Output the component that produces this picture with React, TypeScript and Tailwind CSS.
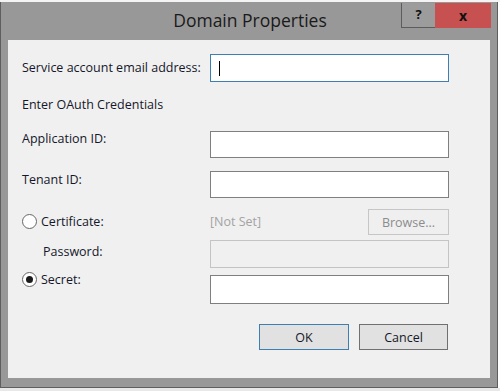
import type { ReactNode } from "react";

const FONT = { fontFamily: '"Open Sans", "Noto Sans", sans-serif' };

function Radio({ checked }: { checked?: boolean }) {
  return (
    <span className="flex h-[15px] w-[15px] items-center justify-center rounded-full border border-[#666] bg-white">
      {checked && <span className="h-[7px] w-[7px] rounded-full bg-[#1a1a1a]" />}
    </span>
  );
}

function Field({ h, disabled, focused, children }: { h: string; disabled?: boolean; focused?: boolean; children?: ReactNode }) {
  const cls = focused
    ? "border-[#3c7fb1] bg-white"
    : disabled
      ? "border-[#c4c4c4] bg-[#f0f0f0]"
      : "border-[#7f7f7f] bg-white";
  return <div className={`flex w-[239px] items-center border px-2 ${h} ${cls}`}>{children}</div>;
}

export default function App() {
  return (
    <div className="flex h-[391px] w-[500px] flex-col overflow-hidden bg-white" style={FONT}>
      {/* window behind peeks out at the top */}
      <div className="h-[2px] bg-[#f4f4f4]" />

      <div className="flex h-[386px] w-[498px] flex-col border-b border-l border-r border-[#5e5e5e] bg-[#989898]">
        {/* Title bar */}
        <div className="relative flex h-[38px] items-center justify-center">
          <span className="ml-[2px] text-[17.5px] leading-none text-[#1a1a1a]">Domain Properties</span>
          <div className="absolute right-[6px] top-[1px] flex">
            <div className="flex h-[25px] w-[34px] items-center justify-center border-b border-l border-[#5c5c5c] bg-[#9c9c9c] text-[13px] font-bold text-[#111]">
              ?
            </div>
            <div className="flex h-[25px] w-[56px] items-center justify-center bg-[#c75050] text-[14px] font-bold leading-none text-[#111]">
              x
            </div>
          </div>
        </div>

        {/* Client area */}
        <div className="ml-[7px] flex h-[338px] w-[482px] flex-col bg-[#f0f0f0] pl-[14px] pt-[14px] text-[12.5px] leading-[17px] text-[#15172a]">
          <div className="flex items-start">
            <span className="mt-[5px] w-[188px]">Service account email address:</span>
            <Field h="h-[28px]" focused>
              <span className="h-[15px] w-px bg-black" />
            </Field>
          </div>

          <div className="mt-[14px]">Enter OAuth Credentials</div>

          <div className="mt-[17px] flex items-start">
            <span className="w-[188px]">Application ID:</span>
            <div className="mt-[1px]">
              <Field h="h-[27px]" />
            </div>
          </div>

          <div className="mt-[13px] flex items-start">
            <span className="w-[188px]">Tenant ID:</span>
            <Field h="h-[27px]" />
          </div>

          <div className="mt-[11px] flex items-start">
            <div className="flex w-[188px] items-start">
              <span className="mt-[5px]">
                <Radio />
              </span>
              <span className="ml-[4px] mt-[4px]">Certificate:</span>
            </div>
            <div className="flex w-[239px] items-start justify-between">
              <span className="mt-[4px] text-[#a3a3a3]">[Not Set]</span>
              <div className="flex h-[26px] w-[81px] items-center justify-center border border-[#c6c6c6] bg-[#efefef] text-[#8c8c8c]">
                Browse...
              </div>
            </div>
          </div>

          <div className="mt-[5px] flex items-start">
            <span className="ml-[21px] mt-[3px] w-[167px]">Password:</span>
            <Field h="h-[28px]" disabled />
          </div>

          <div className="mt-[3px] flex items-start">
            <div className="flex w-[188px] items-start">
              <span className="mt-[1px]">
                <Radio checked />
              </span>
              <span className="ml-[4px]">Secret:</span>
            </div>
            <div className="mt-[4px]">
              <Field h="h-[29px]" />
            </div>
          </div>

          <div className="mt-[20px] flex gap-[10px] pl-[237px]">
            <div className="flex h-[26px] w-[90px] items-center justify-center border border-[#3c7fb1] bg-[#e1e1e1]">
              OK
            </div>
            <div className="flex h-[26px] w-[89px] items-center justify-center border border-[#707070] bg-[#e1e1e1]">
              Cancel
            </div>
          </div>
        </div>
      </div>
      <div className="h-[3px] bg-[#e8e8e8]" />
    </div>
  );
}
